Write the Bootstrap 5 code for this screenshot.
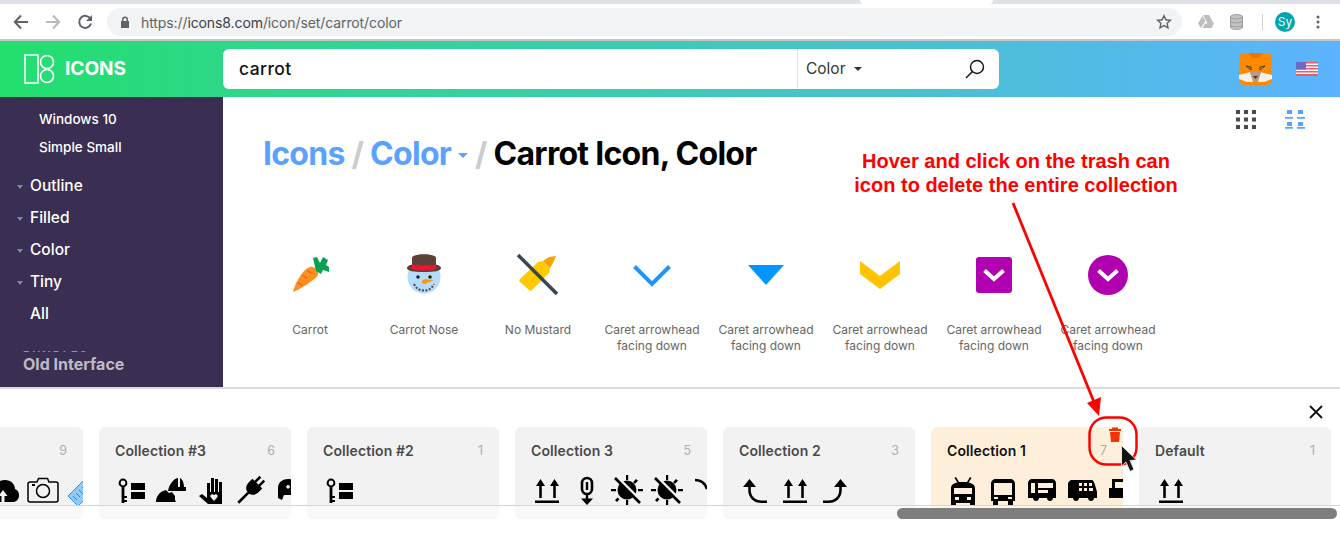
<!DOCTYPE html>
<html lang="en">
<head>
    <meta charset="UTF-8">
    <meta name="viewport" content="width=device-width, initial-scale=1.0">
    <title>Carrot Icon, Color</title>
    <link href="https://cdn.jsdelivr.net/npm/bootstrap@5.3.3/dist/css/bootstrap.min.css" rel="stylesheet">
    <style>
        html, body { height: 100%; overflow: hidden; }
        body { font-family: Inter, "Liberation Sans", sans-serif; background: #fff; position: relative; }
        .page-wrap { height: 538px; }

        /* browser chrome */
        .tab-strip { height: 4px; background: #dee1e6; }
        .tab-active { width: 133px; margin-left: 860px; height: 4px; background: #fff; border-radius: 0 0 4px 4px; }
        .browser-bar { height: 37px; border-bottom: 2px solid #c4c6c8; padding: 4px 0 3px 5px; }
        .nav-btn { width: 32px; flex: none; text-align: center; line-height: 0; }
        .addr-box { margin-left: 6px; width: 1075px; flex: none; height: 28px; border-radius: 14px; background: #f1f3f4; padding: 0 10px 0 12px; font-size: 14px; color: #5f6368; }
        .addr-box b { font-weight: 400; color: #3c4043; }
        .addr-url { margin-left: 10px; letter-spacing: -.1px; }
        .ext-group { width: 158px; flex: none; }
        .ext-group .gap-a { margin-left: 16px; }
        .ext-group .gap-b { margin-left: 19px; }
        .ext-group .gap-c { margin-left: 12px; }
        .ext-group .gap-d { margin-left: 21px; }
        .avatar-dot { width: 20px; height: 20px; border-radius: 50%; background: #00a5ad; color: #fff; font-size: 12px; line-height: 20px; text-align: center; }
        .tool-sep { width: 1px; height: 16px; background: #d0d2d4; }

        /* green header */
        .top-band { height: 56px; background: linear-gradient(90deg, #23df6e, #5cb3ff); }
        .brand-cell { width: 223px; padding-left: 24px; color: #fff; font-size: 19px; font-weight: 700; gap: 10px; }
        .brand-cell span { padding-top: 1px; }
        .search-box { width: 776px; height: 40px; background: #fff; border-radius: 6px; }
        .search-text { flex: 1; padding-left: 16px; font-size: 17.5px; font-weight: 500; color: #111; letter-spacing: .4px; padding-top: 1px; }
        .search-kind { width: 202px; height: 100%; border-left: 1px solid #e3e3e3; padding: 0 14px 0 8px; font-size: 15.500px; color: #333; }
        .kind-caret { border: 4px solid transparent; border-top: 4px solid #333; border-bottom: 0; margin-left: 8px; }
        .band-right { flex: 1; padding-right: 22px; gap: 24px; }

        /* middle */
        .mid-area { height: 290px; }
        .side-nav { width: 223px; flex: none; background: #3a2e52; color: #fff; position: relative; overflow: hidden; padding-top: 8px; }
        .sub-item { font-size: 13.5px; font-weight: 500; padding-left: 39px; height: 28px; line-height: 28px; }
        .sub-item + .top-item { margin-top: 9px; }
        .top-item { font-size: 15.5px; font-weight: 500; height: 32px; line-height: 32px; padding-left: 30px; position: relative; }
        .top-item.has-kids::before { content: ""; position: absolute; left: 17px; top: 15px; border: 3.5px solid transparent; border-top: 4px solid #7f86ab; border-bottom: 0; }
        .old-link { position: absolute; left: 0; right: 0; bottom: 0; height: 34px; background: #3a2e52; padding-left: 23px; font-size: 16px; font-weight: 700; line-height: 22px; color: #bdbbc4; }
        .bundles-cut { position: absolute; left: 23px; top: 251px; right: 20px; height: 4px; overflow: hidden; font-size: 11px; line-height: 14px; font-weight: 700; letter-spacing: 2px; color: #8d93b8; }
        .main-pane { flex: 1; position: relative; padding: 37px 0 0 40px; }
        .view-btns { position: absolute; right: 35px; top: 13px; gap: 29px; line-height: 0; }
        .page-head { font-size: 32px; font-weight: 700; line-height: 40px; margin: 0; color: #000; letter-spacing: -.72px; white-space: nowrap; }
        .page-head a { color: #5aa2ff; text-decoration: none; }
        .page-head i { font-style: normal; color: #ccc; }
        .head-caret { display: inline-block; border: 5px solid transparent; border-top: 5px solid #5aa2ff; border-bottom: 0; vertical-align: middle; margin: 0 0 2px 7px; }
        .icon-grid { margin: 75px 0 0 -10px; }
        .icon-cell { width: 114px; flex: none; text-align: center; font-size: 12px; line-height: 16px; color: #666; }
        .icon-cell svg { display: block; margin: 0 auto 23px; width: 50px; height: 50px; }

        /* bottom */
        .drawer { height: 150px; border-top: 2px solid #dcdcdc; position: relative; overflow: hidden; }
        .drawer-close { position: absolute; right: 17px; top: 16px; line-height: 0; }
        .coll-row { margin: 38px 0 0 -109px; gap: 16px; }
        .coll-card { width: 192px; height: 92px; flex: none; background: #f2f2f2; border-radius: 6px; padding: 14px 16px 0; overflow: hidden; }
        .coll-card.is-hover { background: #fdefd9; border-radius: 6px 0 0 6px; }
        .coll-title { font-size: 14px; font-weight: 600; line-height: 20px; color: #4a4a4a; letter-spacing: .1px; }
        .is-hover .coll-title { color: #111; }
        .coll-num { font-size: 12.5px; color: #aeaeae; line-height: 20px; }
        .coll-icons { gap: 8px; margin-top: 13px; }
        .coll-icons svg { width: 32px; height: 32px; flex: none; }
        .scroll-track { position: absolute; left: 0; right: 0; top: 116px; height: 15px; background: rgba(255, 255, 255, .45); border-top: 1px solid #d6d6d6; }
        .scroll-thumb { position: absolute; left: 897px; right: 3px; top: 2px; height: 11px; border-radius: 6px; background: #7e7e7e; }

        /* annotation on top of the page */
        .note-text { position: absolute; left: 816px; width: 400px; top: 149px; text-align: center; color: #f00; font-family: "Liberation Sans", Arial, sans-serif; font-weight: 700; font-size: 20px; line-height: 24px; }
        .note-art { position: absolute; left: 0; top: 0; width: 1340px; height: 538px; pointer-events: none; }
    </style>
</head>
<body>
    <svg width="0" height="0" class="position-absolute">
        <defs>
            <symbol id="i-key" viewBox="0 0 32 32">
                <circle cx="8" cy="9" r="3.4" fill="none" stroke="#000" stroke-width="2"/>
                <path d="M6.6 13h2.8v16H6.600zM9 22h3v2H9zM9 26h3v2H9zM16 9h14v7H16zM16 18h14v7H16z"/>
            </symbol>
            <symbol id="i-up2" viewBox="0 0 32 32">
                <path d="M4 26.500h24V29H4zM8.200 12H5l4.500-7L14 12h-3.200v12H8.200zM22.200 12H19l4.500-7L28 12h-3.200v12h-2.600z"/>
            </symbol>
            <symbol id="i-hats" viewBox="0 0 32 32">
                <path d="M1 28c0-5 3-9 7-11l3-1 3 3 3-1 3 4v4l1 2z"/>
                <path d="M13 17c1-6 5-12 10-13v9h2V4c2 1 4 4 4 9h2v4z"/>
            </symbol>
            <symbol id="i-hand" viewBox="0 0 32 32">
                <path fill-rule="evenodd" d="M12 9h3v9h1V4h3v14h1V5h3v13h1V8h3v22H13l-9-8 3-2 5 4zM19 21c-2-2-4.500 0-3.500 2l3.500 4 3.500-4c1-2-1.500-4-3.500-2z"/>
            </symbol>
            <symbol id="i-plug" viewBox="0 0 32 32">
                <g transform="rotate(45 16 16)">
                    <path d="M12 0h2.500v7H12zM17.500 0H20v7h-2.500zM9 7h14v5c0 5-3 8-7 8s-7-3-7-8zM14.700 20h2.600v14h-2.600z"/>
                </g>
            </symbol>
            <symbol id="i-ghost" viewBox="0 0 32 32">
                <path fill-rule="evenodd" d="M3 24V14C3 8 8 5 13 5s10 3 10 9v12l-4-1-2-4H9l-2 5zM13 11a1.800 1.800 0 1 0 .1 0z"/>
            </symbol>
            <symbol id="i-pin" viewBox="0 0 32 32">
                <path fill="none" stroke="#000" stroke-width="2.600" d="M11 15V9a5 5 0 0 1 10 0v6a5 5 0 0 1-10 0z"/>
                <path d="M14.800 8h2.400v8h-2.400zM14.800 20h2.400v6h-2.400zM10 24.500h12L16 31z"/>
            </symbol>
            <symbol id="i-nosun" viewBox="0 0 32 32">
                <circle cx="16" cy="16" r="9.500"/>
                <path d="M15 1h2.200v5H15zM15 26h2.200v5H15zM0 15h5v2.200H0zM27 15h5v2.200h-5zM25 5l2 1.800-3 3-1.800-1.800zM6.500 23.500l2 1.800L6 28l-2-1.800z"/>
                <path stroke="#f2f2f2" stroke-width="4.500" d="M6 4l25 25"/>
                <path stroke="#000" stroke-width="2.600" d="M4 4l25 25"/>
            </symbol>
            <symbol id="i-curve" viewBox="0 0 32 32">
                <path fill="none" stroke="#000" stroke-width="2.600" d="M4 6c6 0 10 3 12 9"/>
            </symbol>
            <symbol id="i-backup" viewBox="0 0 32 32">
                <path fill="none" stroke="#000" stroke-width="2.600" d="M10.500 12v4c0 7 5 11.700 12 11.700H28"/>
                <path d="M10.500 5l6.500 8H4z"/>
            </symbol>
            <symbol id="i-forup" viewBox="0 0 32 32">
                <path fill="none" stroke="#000" stroke-width="2.600" d="M21.500 12v4c0 7-5 11.700-12 11.700H4"/>
                <path d="M21.500 5l6.500 8H15z"/>
            </symbol>
            <symbol id="i-tram" viewBox="0 0 32 32">
                <path fill-rule="evenodd" d="M9 3l3 5h8l3-5 1.500 1-3 4.500C25 9 28 11 28 14v17h-5v-2H9v2H4V14c0-3 3-5 6.500-5.500L7.500 4zM7 14v6h18v-6zM8 23v3h4v-3zM20 23v3h4v-3z"/>
            </symbol>
            <symbol id="i-bus" viewBox="0 0 32 32">
                <path fill-rule="evenodd" d="M9 5h14c3 0 5 2 5 5v17h-2v4h-5v-4H11v4H6v-4H4V10c0-3 2-5 5-5zM7 9v12h18V9zM7 23v2h4v-2zM21 23v2h4v-2z"/>
            </symbol>
            <symbol id="i-coach" viewBox="0 0 32 32">
                <path fill-rule="evenodd" d="M5 5h20c2 0 4 2 4 4v15h-3c0 4-6 4-6 0h-8c0 4-6 4-6 0H1V9c0-2 2-4 4-4zM4 9v10h4V9zM11 9v5h15V9zM11 16v3h10v-3z"/>
            </symbol>
            <symbol id="i-van" viewBox="0 0 32 32">
                <path fill-rule="evenodd" d="M5 6h20c2 0 4 8 5 12v6h-3c0 4-6 4-6 0h-9c0 4-6 4-6 0H1V10c0-2 2-4 4-4zM12 9v3h3V9zM17 9v3h3V9zM22 9v3h3V9zM12 14v3h3v-3zM17 14v3h3v-3zM22 14v3h4v-3z"/>
            </symbol>
            <symbol id="i-stall" viewBox="0 0 32 32">
                <path fill-rule="evenodd" d="M5 5h14v9h3v10H2V14h3zM8 8v6h8V8z"/>
            </symbol>
            <symbol id="i-cloud" viewBox="0 0 32 32">
                <path fill-rule="evenodd" d="M18 6c6 0 10 4 10 9 3 1 4 4 4 6.500 0 4-3 6.500-6 6.500H6c-4 0-6-3-6-6 0-4 3-6 6-6 1-6 6-10 12-10zM16 16l-4.500 6h3v6h3v-6h3z"/>
            </symbol>
            <symbol id="i-camera" viewBox="0 0 32 32">
                <path fill="none" stroke="#000" stroke-width="1.500" d="M3 8h7l1.500-3.500h9L22 8h7c1 0 2 1 2 2v16c0 1-1 2-2 2H3c-1 0-2-1-2-2V10c0-1 1-2 2-2z"/>
                <circle cx="16" cy="17" r="6.500" fill="none" stroke="#000" stroke-width="1.500"/>
                <path d="M5 10h3v2H5z"/>
            </symbol>
            <symbol id="i-comb" viewBox="0 0 32 32">
                <path fill="#90caf9" stroke="#2196f3" d="M1 22L17 6l10 10-16 16z"/>
                <path stroke="#1e88e5" d="M6 22l4 4M9 19l4 4M12 16l4 4M15 13l4 4"/>
            </symbol>
        </defs>
    </svg>

    <div class="page-wrap d-flex flex-column">
        <!-- browser chrome -->
        <div class="tab-strip"><div class="tab-active"></div></div>
        <div class="browser-bar d-flex align-items-center">
            <div class="nav-btn"><svg width="16" height="16" viewBox="0 0 16 16"><path fill="none" stroke="#5f6368" stroke-width="2" d="M15 8H2M8 1.500L1.800 8 8 14.500"/></svg></div>
            <div class="nav-btn"><svg width="16" height="16" viewBox="0 0 16 16"><path fill="none" stroke="#b7b9bb" stroke-width="2" d="M1 8h13M8 1.500L14.200 8 8 14.500"/></svg></div>
            <div class="nav-btn"><svg width="16" height="16" viewBox="0 0 16 16"><path fill="none" stroke="#5f6368" stroke-width="2" d="M13.500 5A6 6 0 1 0 14 9.500"/><path fill="#5f6368" d="M15 1v6H9z"/></svg></div>
            <div class="addr-box d-flex align-items-center">
                <svg width="12" height="12" viewBox="0 0 12 12"><path fill="#5f6368" d="M2 5h8v7H2z"/><path fill="none" stroke="#5f6368" stroke-width="1.400" d="M3.700 5V3.500a2.300 2.300 0 0 1 4.600 0V5"/></svg>
                <span class="addr-url flex-grow-1">https://<b>icons8.com</b>/icon/set/carrot/color</span>
                <svg width="16" height="16" viewBox="0 0 16 16"><path fill="none" stroke="#5f6368" stroke-width="1.400" d="M8 1.700l1.900 4.100 4.500.5-3.300 3 .9 4.500L8 11.600l-4 2.200.9-4.500-3.300-3 4.500-.5z"/></svg>
            </div>
            <div class="ext-group d-flex align-items-center">
                <svg class="gap-a" width="16" height="14" viewBox="0 0 16 14"><path fill="#bdbdbd" d="M5 0h6l5 9h-6zM4.500 1L7.500 6 3 13 0 8.500zM4.500 13l2.700-4.500H16L13.500 13z"/></svg>
                <svg class="gap-a" width="13" height="16" viewBox="0 0 13 16"><path fill="#c3c3c3" stroke="#9d9d9d" d="M.5 3c0-3.300 12-3.300 12 0v10c0 3.300-12 3.300-12 0z"/><path fill="none" stroke="#9d9d9d" d="M.5 3c0 2.500 12 2.500 12 0M.5 7c0 2.500 12 2.500 12 0M.5 11c0 2.500 12 2.500 12 0"/></svg>
                <div class="tool-sep gap-b"></div>
                <div class="avatar-dot gap-c">Sy</div>
                <svg class="gap-d" width="4" height="14" viewBox="0 0 4 14"><circle cx="2" cy="2" r="1.500" fill="#5f6368"/><circle cx="2" cy="7" r="1.500" fill="#5f6368"/><circle cx="2" cy="12" r="1.500" fill="#5f6368"/></svg>
            </div>
        </div>

        <!-- green header -->
        <div class="top-band d-flex align-items-center">
            <div class="brand-cell d-flex align-items-center">
                <svg width="31" height="30" viewBox="0 0 31 30"><path fill="none" stroke="#fff" stroke-width="1.600" d="M1 1h13v28H1z"/><circle cx="23" cy="8" r="6.500" fill="none" stroke="#fff" stroke-width="1.600"/><circle cx="23" cy="22" r="6.500" fill="none" stroke="#fff" stroke-width="1.600"/></svg>
                <span>ICONS</span>
            </div>
            <div class="search-box d-flex align-items-center">
                <div class="search-text">carrot</div>
                <div class="search-kind d-flex align-items-center">
                    <span>Color</span>
                    <span class="kind-caret"></span>
                    <svg class="ms-auto" width="20" height="20" viewBox="0 0 20 20"><circle cx="12" cy="8" r="6.500" fill="none" stroke="#111" stroke-width="1.400"/><path stroke="#111" stroke-width="1.400" d="M7.500 12.500L1 19"/></svg>
                </div>
            </div>
            <div class="band-right d-flex align-items-center justify-content-end">
                <svg width="33" height="32" viewBox="0 0 33 32">
                    <rect width="33" height="32" rx="5" fill="#ff8a00"/>
                    <path fill="#f56f00" d="M10 0h13l-3 5h-7z"/>
                    <path fill="#f5f0e8" d="M0 22l11-3 5 9 5-9 12 3v4l-8 3H8l-8-3z"/>
                    <path fill="#b59a86" d="M11 19h11l-3 10h-5z"/>
                    <path fill="#5a2f1d" d="M14 23h5l-2.500 3z"/>
                    <path fill="#e8a000" stroke="#5a3a10" d="M7 13l5 1 0 3zM26 13l-5 1 0 3z"/>
                </svg>
                <svg width="22" height="14" viewBox="0 0 22 14">
                    <rect width="22" height="14" fill="#f9fbfd"/>
                    <path fill="#ef5a68" d="M0 0h22v1.500H0zM0 3h22v1.500H0zM0 6h22v1.500H0zM0 9h22v1.500H0zM0 12h22v2H0z"/>
                    <rect width="10" height="7.500" fill="#6a6cc4"/>
                </svg>
            </div>
        </div>

        <!-- sidebar and icon results -->
        <div class="mid-area d-flex">
            <nav class="side-nav">
                <div class="sub-item">Windows 10</div>
                <div class="sub-item">Simple Small</div>
                <div class="top-item has-kids">Outline</div>
                <div class="top-item has-kids">Filled</div>
                <div class="top-item has-kids">Color</div>
                <div class="top-item has-kids">Tiny</div>
                <div class="top-item">All</div>
                <div class="bundles-cut d-flex justify-content-between"><span>BUNDLES</span><span>&minus;</span></div>
                <div class="old-link">Old Interface</div>
            </nav>
            <main class="main-pane">
                <div class="view-btns d-flex">
                    <svg width="20" height="20" viewBox="0 0 20 20"><path fill="#4a4a4a" d="M0 0h4v4H0zM8 0h4v4H8zM16 0h4v4h-4zM0 7.500h4v4H0zM8 7.500h4v4H8zM16 7.500h4v4h-4zM0 15h4v4H0zM8 15h4v4H8zM16 15h4v4h-4z"/></svg>
                    <svg width="20" height="20" viewBox="0 0 20 20"><path fill="#5aa2ff" d="M2 0h5v4H2zM13 0h5v4h-5zM0 7h8v1.800H0zM12 7h8v1.800h-8zM2 12h5v4H2zM13 12h5v4h-5zM0 17h8v1.800H0zM12 17h8v1.800h-8z"/></svg>
                </div>
                <h1 class="page-head"><a href="#">Icons</a> <i>/</i> <a href="#">Color<span class="head-caret"></span></a> <i>/</i> Carrot Icon, Color</h1>
                <div class="icon-grid d-flex">
                    <div class="icon-cell">
                        <svg viewBox="0 0 50 50">
                            <path fill="#ff8f1f" d="M8 43C10 34 18 20 25 18c5-1 9 4 8 8-2 4-17 14-25 17z"/>
                            <path fill="#e56c0c" d="M13 33l5 3-1 1-5-3zM18 26l5 3-1 1-5-3zM23 21l4 3-1 1-4-3z"/>
                            <path fill="#0aa04f" d="M31 22L28 9l4-1 3 6 3-6 5 3-2 5 3 2v5l-6-2-2 4z"/>
                        </svg>
                        Carrot
                    </div>
                    <div class="icon-cell">
                        <svg viewBox="0 0 50 50">
                            <circle cx="25" cy="28" r="16.500" fill="#b4dcff"/>
                            <path fill="#5d4037" d="M8 19c0-2 3-3 5-3.500V9c0-5 24-5 24 0v6.500c2 .5 5 1.500 5 3.500 0 3-6 4-17 4S8 22 8 19z"/>
                            <path fill="#f0132d" d="M13 15c5 2 19 2 24 0v5c-5 2-19 2-24 0z"/>
                            <circle cx="19" cy="28" r="1.800" fill="#222"/><circle cx="31" cy="28" r="1.800" fill="#222"/>
                            <path fill="#ff9800" d="M23 32c1-2 4-2 5-1.500l7 .5-7 3-2 1c-2 0-4-1-3-3z"/>
                            <path fill="none" stroke="#5d4037" stroke-width="2" stroke-dasharray="2 1.500" d="M15 35c2 4 5 6.500 10 6.500S33 39 35 35"/>
                        </svg>
                        Carrot Nose
                    </div>
                    <div class="icon-cell">
                        <svg viewBox="0 0 50 50">
                            <path fill="#ffca00" d="M7 33c-1-1-1-2 0-3l18-17 5-1 7 7-1 5-17 17c-1 1-2 1-3 0z"/>
                            <path fill="#ffa000" d="M30 12l6-4 7-1-3 7-3 5z"/>
                            <path stroke="#37474f" stroke-width="3.500" d="M5 6l39 39"/>
                        </svg>
                        No Mustard
                    </div>
                    <div class="icon-cell">
                        <svg viewBox="0 0 50 50"><path fill="none" stroke="#1e96ff" stroke-width="4" d="M7.500 17.500L25 35l17.500-17.500"/></svg>
                        Caret arrowhead facing down
                    </div>
                    <div class="icon-cell">
                        <svg viewBox="0 0 50 50"><path fill="#0096ff" d="M7 16h36L25 36z"/></svg>
                        Caret arrowhead facing down
                    </div>
                    <div class="icon-cell">
                        <svg viewBox="0 0 50 50"><path fill="#ffc300" d="M5 12l20 15 20-15v13L25 40 5 25z"/></svg>
                        Caret arrowhead facing down
                    </div>
                    <div class="icon-cell">
                        <svg viewBox="0 0 50 50"><rect x="7" y="8" width="36" height="36" rx="3" fill="#b000b0"/><path fill="none" stroke="#fff" stroke-width="4" d="M15.500 21.500L25 30l9.500-8.500"/></svg>
                        Caret arrowhead facing down
                    </div>
                    <div class="icon-cell">
                        <svg viewBox="0 0 50 50"><circle cx="25" cy="26" r="20" fill="#b000b0"/><path fill="none" stroke="#fff" stroke-width="4" d="M15.500 21.500L25 30l9.500-8.500"/></svg>
                        Caret arrowhead facing down
                    </div>
                </div>
            </main>
        </div>

        <!-- collections drawer -->
        <div class="drawer">
            <div class="drawer-close"><svg width="14" height="14" viewBox="0 0 14 14"><path stroke="#111" stroke-width="1.800" d="M1 1l12 12M13 1L1 13"/></svg></div>
            <div class="coll-row d-flex">
                <div class="coll-card">
                    <div class="d-flex justify-content-between"><span class="coll-title"></span><span class="coll-num ms-auto">9</span></div>
                    <div class="coll-icons d-flex"><svg></svg><svg></svg><svg><use href="#i-cloud"/></svg><svg><use href="#i-camera"/></svg><svg><use href="#i-comb"/></svg></div>
                </div>
                <div class="coll-card">
                    <div class="d-flex justify-content-between"><span class="coll-title">Collection #3</span><span class="coll-num">6</span></div>
                    <div class="coll-icons d-flex"><svg><use href="#i-key"/></svg><svg><use href="#i-hats"/></svg><svg><use href="#i-hand"/></svg><svg><use href="#i-plug"/></svg><svg><use href="#i-ghost"/></svg></div>
                </div>
                <div class="coll-card">
                    <div class="d-flex justify-content-between"><span class="coll-title">Collection #2</span><span class="coll-num">1</span></div>
                    <div class="coll-icons d-flex"><svg><use href="#i-key"/></svg></div>
                </div>
                <div class="coll-card">
                    <div class="d-flex justify-content-between"><span class="coll-title">Collection 3</span><span class="coll-num">5</span></div>
                    <div class="coll-icons d-flex"><svg><use href="#i-up2"/></svg><svg><use href="#i-pin"/></svg><svg><use href="#i-nosun"/></svg><svg><use href="#i-nosun"/></svg><svg><use href="#i-curve"/></svg></div>
                </div>
                <div class="coll-card">
                    <div class="d-flex justify-content-between"><span class="coll-title">Collection 2</span><span class="coll-num">3</span></div>
                    <div class="coll-icons d-flex"><svg><use href="#i-backup"/></svg><svg><use href="#i-up2"/></svg><svg><use href="#i-forup"/></svg></div>
                </div>
                <div class="coll-card is-hover">
                    <div class="d-flex justify-content-between"><span class="coll-title">Collection 1</span><span class="coll-num">7</span></div>
                    <div class="coll-icons d-flex"><svg><use href="#i-tram"/></svg><svg><use href="#i-bus"/></svg><svg><use href="#i-coach"/></svg><svg><use href="#i-van"/></svg><svg><use href="#i-stall"/></svg></div>
                </div>
                <div class="coll-card">
                    <div class="d-flex justify-content-between"><span class="coll-title">Default</span><span class="coll-num">1</span></div>
                    <div class="coll-icons d-flex"><svg><use href="#i-up2"/></svg></div>
                </div>
            </div>
            <div class="scroll-track"><div class="scroll-thumb"></div></div>
        </div>
    </div>

    <!-- red annotation drawn over the screenshot -->
    <div class="note-text">Hover and click on the trash can<br>icon to delete the entire collection</div>
    <svg class="note-art" viewBox="0 0 1340 538">
        <path stroke="#f00" stroke-width="2.800" d="M1013 203L1094 402"/>
        <path fill="#f00" d="M1099 416L1087 403 1101 397z"/>
        <rect x="1089.500" y="417.500" width="47" height="47" rx="17" fill="none" stroke="#f00" stroke-width="2.500"/>
        <path fill="#f4330a" d="M1109 429h3v-1.500h6v1.500h3v2h-12zM1110 432h10l-1 10h-8z"/>
        <path fill="#111" stroke="#fff" stroke-width=".8" d="M1121.500 445.500l15 14.500-6.500.5 4 9-4 2-4-9.500-4.500 4z"/>
    </svg>

    <script src="https://cdn.jsdelivr.net/npm/bootstrap@5.3.3/dist/js/bootstrap.bundle.min.js"></script>
</body>
</html>
